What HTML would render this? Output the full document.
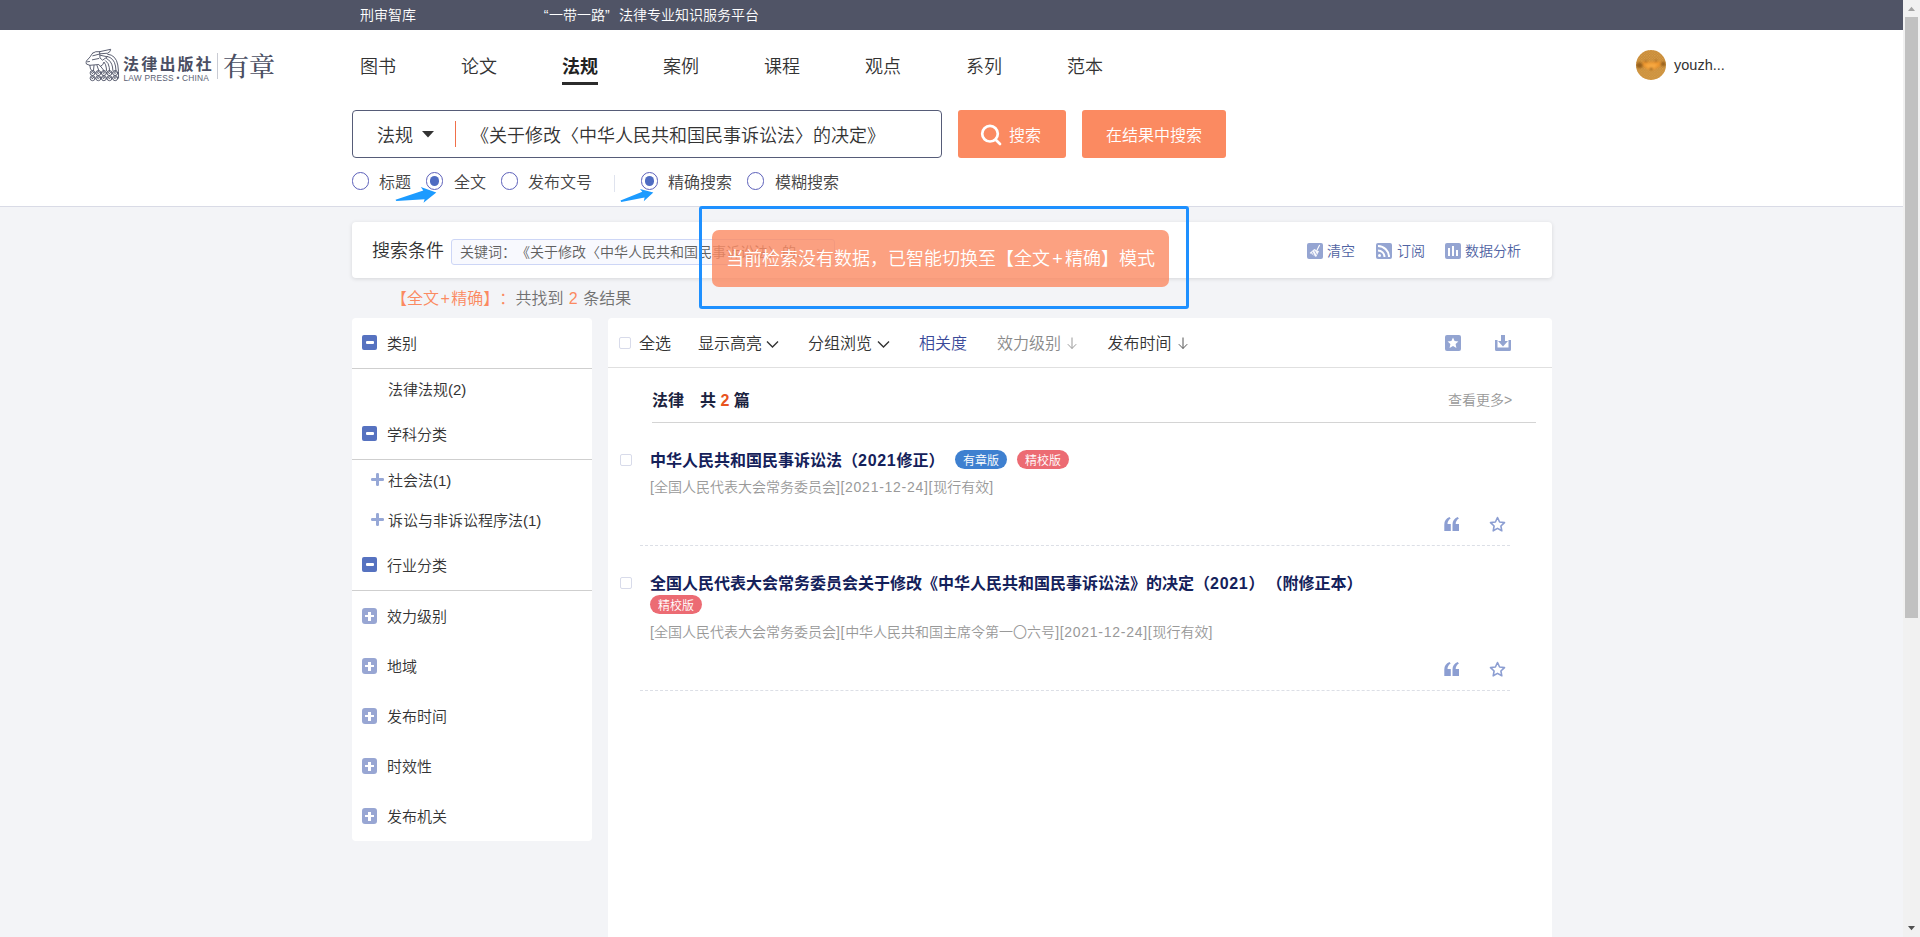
<!DOCTYPE html>
<html lang="zh-CN">
<head>
<meta charset="utf-8">
<title>法规检索 - 有章</title>
<style>
*{box-sizing:border-box;margin:0;padding:0}
html,body{width:1920px;height:937px;overflow:hidden}
body{font-weight:350;text-spacing-trim:space-all;font-family:"Liberation Sans","Noto Sans CJK SC",sans-serif;background:#f3f4f7;color:#333;position:relative}
.abs{position:absolute;white-space:nowrap}
#topbar{position:absolute;left:0;top:0;width:1903px;height:30px;background:#505466}
#topbar span{position:absolute;top:0;line-height:30px;color:#fff;font-size:14px;white-space:nowrap}
#topbar i.q{display:inline-block;width:9px;font-style:normal;text-align:center}
#header{position:absolute;left:0;top:30px;width:1903px;height:177px;background:#fff;border-bottom:1px solid #d9dbe6}
#scroll{position:absolute;left:1903px;top:0;width:17px;height:937px;background:#f1f1f1}
#scroll .thumb{position:absolute;left:2px;top:17px;width:13px;height:601px;background:#c1c1c1}
.nav{position:absolute;top:53px;font-size:18px;line-height:28px;color:#333}
.nav.on{font-weight:bold;color:#222}
.nav.on:after{content:"";position:absolute;left:0;right:0;bottom:-4px;height:3px;background:#2b2b2b}
#sbox{position:absolute;left:352px;top:110px;width:590px;height:48px;border:1px solid #565c78;border-radius:4px;background:#fff}
.btn{position:absolute;top:110px;height:48px;background:#fb8a61;border-radius:3px;color:#fff;font-size:16px;line-height:51px;overflow:hidden;text-align:center}
.radio{position:absolute;top:172.400px;width:17.400px;height:17.400px;border:1.200px solid #5c60ba;border-radius:50%;background:#fff}
.radio.on:after{content:"";position:absolute;left:2.800px;top:2.800px;width:9.400px;height:9.400px;border-radius:50%;background:#4f6cc2}
.rl{position:absolute;top:171.500px;font-size:16px;line-height:22px;color:#444}
.card{position:absolute;background:#fff;border-radius:4px}

.ico{position:absolute}
.t14{font-size:14px;line-height:20px}
.t15{font-size:15px;line-height:22px;color:#333;margin-top:1px}
.t16{font-size:16px;line-height:22px}
.sep{position:absolute;height:1px;background:#cfcfcf}
.mi{position:absolute;left:362px;width:15px;height:15px;border-radius:2px;background:#5672c0}
.mi:after{content:"";position:absolute;left:4px;top:6px;width:8px;height:3px;background:#fff;border-radius:1px}
.pi{position:absolute;left:362px;width:15px;height:16px;border-radius:3px;background:#98a6d3}
.pi:before{content:"";position:absolute;left:3px;top:6.800px;width:9px;height:2.400px;background:#fff}
.pi:after{content:"";position:absolute;left:6.300px;top:3.500px;width:2.400px;height:9px;background:#fff}
.sp{position:absolute;width:12.500px;height:12.500px}
.sp:before{content:"";position:absolute;left:0;top:5px;width:12.500px;height:2.500px;border-radius:1.250px;background:#96a7d6}
.sp:after{content:"";position:absolute;left:5px;top:0;width:2.500px;height:12.500px;border-radius:1.250px;background:#96a7d6}
.cb{position:absolute;width:12px;height:12px;border:1px solid #d8dbea;border-radius:2px;background:#fff}
.pill{position:absolute;width:52px;height:19px;border-radius:9.500px;color:#fff;font-size:12px;line-height:22px;text-align:center;overflow:hidden}
.title{position:absolute;left:650px;font-size:16px;line-height:24px;font-weight:bold;color:#14215a;white-space:nowrap}
.meta{position:absolute;left:650px;font-size:14px;line-height:20px;color:#999;white-space:nowrap}
.dash{position:absolute;left:640px;width:870px;height:0;border-top:1px dashed #dcdfe6}
.ls{letter-spacing:0.720px}
</style>
</head>
<body>
<div id="topbar">
  <span style="left:360px">刑审智库</span>
  <span style="left:543px"><i class="q" style="width:6px">“</i>一带一路<i class="q" style="width:14px;text-align:left">”</i>法律专业知识服务平台</span>
</div>
<div id="header"></div>
<div id="scroll"><div class="thumb"></div><svg class="ico" style="left:0;top:0" width="17" height="937" viewBox="0 0 17 937"><path d="M5 11 L8.500 6.700 L12 11 Z" fill="#a3a3a3"/><path d="M5 926 L8.500 930.300 L12 926 Z" fill="#505050"/></svg></div>

<!-- nav -->
<div class="nav" style="left:360px">图书</div>
<div class="nav" style="left:461px">论文</div>
<div class="nav on" style="left:562px">法规</div>
<div class="nav" style="left:663px">案例</div>
<div class="nav" style="left:764px">课程</div>
<div class="nav" style="left:865px">观点</div>
<div class="nav" style="left:966px">系列</div>
<div class="nav" style="left:1067px">范本</div>

<!-- logo -->
<svg class="ico" style="left:80px;top:44px" width="48" height="40" viewBox="0 0 48 40" fill="none" stroke="#4b4f63" stroke-width="0.900" stroke-linecap="round" stroke-linejoin="round">
  <g>
    <circle cx="12.600" cy="29" r="2.500"/><circle cx="18.400" cy="29" r="2.500"/><circle cx="23.900" cy="29" r="2.500"/><circle cx="29.500" cy="29" r="2.500"/><circle cx="35.200" cy="29" r="2.500"/>
    <circle cx="12.600" cy="34.200" r="2.500"/><circle cx="18.400" cy="34.200" r="2.500"/><circle cx="23.900" cy="34.200" r="2.500"/><circle cx="29.500" cy="34.200" r="2.500"/><circle cx="35.200" cy="34.200" r="2.500"/>
    <path d="M12.600 29.500 a1 1 0 1 1 1 -1 M18.400 29.500 a1 1 0 1 1 1 -1 M23.900 29.500 a1 1 0 1 1 1 -1 M29.500 29.500 a1 1 0 1 1 1 -1 M35.200 29.500 a1 1 0 1 1 1 -1"/>
    <path d="M12.600 34.700 a1 1 0 1 1 1 -1 M18.400 34.700 a1 1 0 1 1 1 -1 M23.900 34.700 a1 1 0 1 1 1 -1 M29.500 34.700 a1 1 0 1 1 1 -1 M35.200 34.700 a1 1 0 1 1 1 -1"/>
  </g>
  <path d="M27.700 10.200 Q36 11 37.800 21 Q38.800 27 38.600 34"/>
  <path d="M27.300 12.400 Q34 14 35.500 22 L36 27"/>
  <path d="M26.500 14.500 Q31.500 17 32.500 23 L32.900 26.500"/>
  <path d="M25.600 16.700 Q28.800 19 29.300 23.500 L29.500 26.500"/>
  <path d="M24.300 18.400 Q26 20.500 26.300 24 L26.500 26.500"/>
  <path d="M12.800 9 Q15.500 7 19.600 7.700 L30.700 5.300 Q30.500 8 27.700 9.200 L20 9.800"/>
  <path d="M19.600 7.700 L20 14 L22.600 16.200 L27.300 12.800 L20.200 11.200"/>
  <path d="M12.800 9 Q11 11 10.200 12.800 L6.400 17 Q5.800 18.500 6.400 20 L9.800 21.300 L18.800 20.500 Q19.500 22 20.500 22.200 Q23 21.500 23.900 18.400"/>
  <path d="M12.400 15.800 L18.800 14.500 M12.800 11.800 L19 10.200 M7.500 17.800 L9.500 17.500"/>
  <path d="M9.800 21.300 L10.500 25 L12 26.500 M14 21.500 L13.500 26.500 M17 21.500 L18.800 26.500 M20.500 22.200 L23.900 26.500"/>
</svg>
<div class="abs" style="left:123px;top:54.500px;font-size:16px;line-height:20px;font-weight:bold;color:#4b4f63;letter-spacing:2.200px">法律出版社</div>
<div class="abs" style="left:123.500px;top:73px;font-size:8.400px;line-height:10px;color:#5b5f73;letter-spacing:0.200px">LAW PRESS • CHINA</div>
<div class="abs" style="left:217px;top:53px;width:1px;height:26px;background:#c9cbd3"></div>
<div class="abs" style="left:223px;top:51px;font-family:'Liberation Serif','Noto Serif CJK SC',serif;font-size:26px;line-height:34px;font-weight:500;color:#4b4f63">有章</div>

<!-- avatar -->
<svg class="ico" style="left:1636px;top:50px" width="30" height="30" viewBox="0 0 30 30">
  <defs><clipPath id="av"><circle cx="15" cy="15" r="15"/></clipPath><filter id="bl" x="-20%" y="-20%" width="140%" height="140%"><feGaussianBlur stdDeviation="1"/></filter>
  <pattern id="wv" width="2.600" height="2.600" patternUnits="userSpaceOnUse"><rect width="2.600" height="2.600" fill="#c48634"/><rect width="1.300" height="1.300" fill="#d9a04c"/><rect x="1.300" y="1.300" width="1.300" height="1.300" fill="#d39a48"/></pattern></defs>
  <g clip-path="url(#av)">
    <rect width="30" height="30" fill="url(#wv)"/>
    <g filter="url(#bl)">
      <rect x="0" y="19" width="30" height="11" fill="#d29a45" opacity="0.500"/>
      <ellipse cx="3.600" cy="15.200" rx="3.400" ry="2.800" fill="#96601f"/>
      <ellipse cx="27" cy="13.900" rx="2.800" ry="2.200" fill="#96601f"/>
      <path d="M6 11.200 L10 12.600 L12 12.100 L20.900 11.700 L24.900 11.600 L24.400 15.700 L19 19 L15.200 20.400 L11.500 19 L7.400 16.600 Z" fill="#ee962e"/>
      <path d="M9 14.500 Q15 12.500 21.500 14.300 L19 17.500 L15.200 19 L11.500 17.800 Z" fill="#f6a942"/>
      <ellipse cx="9.800" cy="11.500" rx="1.400" ry="0.800" fill="#7a4510"/>
      <ellipse cx="20" cy="11" rx="1.300" ry="0.800" fill="#7a4510"/>
      <circle cx="15.200" cy="18.900" r="1.100" fill="#4a2c0c"/>
    </g>
  </g>
</svg>
<div class="abs" style="left:1674px;top:55px;font-size:14.500px;line-height:20px;color:#333">youzh...</div>

<!-- search -->
<div id="sbox"></div>
<div class="abs" style="left:377px;top:122px;font-size:18px;line-height:28px;color:#333">法规</div>
<svg class="ico" style="left:422px;top:131px" width="12" height="7" viewBox="0 0 12 7"><path d="M0 0H12L6 6.500Z" fill="#333"/></svg>
<div class="abs" style="left:455px;top:121px;width:1px;height:26px;background:#f0704a"></div>
<div class="abs" style="left:471px;top:122px;font-size:18px;line-height:28px;color:#333">《关于修改〈中华人民共和国民事诉讼法〉的决定》</div>

<!-- radios -->
<div class="radio" style="left:352px"></div><div class="rl" style="left:379px">标题</div>
<div class="radio on" style="left:426px"></div><div class="rl" style="left:454px">全文</div>
<div class="radio" style="left:501px"></div><div class="rl" style="left:528px">发布文号</div>
<div class="abs" style="left:614px;top:175px;width:1px;height:17px;background:#dfe3ee"></div>
<div class="radio on" style="left:641px"></div><div class="rl" style="left:668px">精确搜索</div>
<div class="radio" style="left:747px"></div><div class="rl" style="left:775px">模糊搜索</div>
<svg class="ico" style="left:390px;top:184px" width="280" height="22" viewBox="390 184 280 22"><path d="M395.500 199.800 L423.300 190.600 L420.800 186.900 L436.300 192.500 L423.500 202.700 L424.600 199.200 L396.300 201.100 Z" fill="#1c9bff"/><path d="M620.500 200.400 L642.300 191.700 L640 189 L653.300 192.500 L643.800 201.300 L644.600 197.500 L621.200 202 Z" fill="#1c9bff"/></svg>

<div class="btn" style="left:958px;width:108px"></div>
<svg class="ico" style="left:979px;top:122.800px" width="26" height="24" viewBox="0 0 26 24" fill="none" stroke="#fff" stroke-width="2.700" stroke-linecap="round"><circle cx="11" cy="10.700" r="7.800"/><path d="M17.500 17.500 L21 21"/></svg>
<div class="abs" style="left:1009px;top:123.500px;font-size:16px;line-height:24px;color:#fff">搜索</div>
<div class="btn" style="left:1082px;width:144px">在结果中搜索</div>


<!-- condition card -->
<div class="card" style="left:352px;top:222px;width:1200px;height:56px;box-shadow:0 1px 4px rgba(0,0,0,.12)"></div>
<div class="abs" style="left:372px;top:237px;font-size:18px;line-height:28px;color:#333">搜索条件</div>
<div class="abs" style="left:451px;top:238.500px;width:384px;height:26.500px;border:1px solid #cdd6f6;border-radius:3px;background:#f8f9fe"></div>
<div class="abs" style="left:460px;top:242px;font-size:14px;line-height:20px;color:#606060">关键词：《关于修改〈中华人民共和国民事诉讼法〉的...</div>
<div class="abs" style="left:816px;top:242px;font-size:14px;line-height:20px;color:#aaa">×</div>

<svg class="ico" style="left:1306.500px;top:243px" width="16" height="16" viewBox="0 0 16 16"><rect width="16" height="16" rx="2" fill="#95a5d2"/><path d="M12.500 2.300 L10.200 6.800" stroke="#fff" stroke-width="1.100" fill="none" stroke-linecap="round"/><path d="M2.600 9.900 L7.300 6 L12 8.300 L9.100 14 Z" fill="#fff" opacity="0.920"/><path d="M5.200 8.700 L7.200 12.700 M7.500 7.600 L9.800 11.800 M4 10.700 L5.400 11.700" stroke="#95a5d2" stroke-width="0.800" fill="none"/></svg>
<div class="abs t14" style="left:1327px;top:241px;color:#4f63a3">清空</div>
<svg class="ico" style="left:1376px;top:243px" width="16" height="16" viewBox="0 0 16 16"><rect width="16" height="16" rx="2" fill="#95a5d2"/><circle cx="3.500" cy="12.500" r="1.500" fill="#fff"/><path d="M2 7.500 A6.500 6.500 0 0 1 8.500 14 M2 3 A11 11 0 0 1 13 14" stroke="#fff" stroke-width="2" fill="none"/></svg>
<div class="abs t14" style="left:1397px;top:241px;color:#4f63a3">订阅</div>
<svg class="ico" style="left:1445px;top:243px" width="16" height="16" viewBox="0 0 16 16"><rect width="16" height="16" rx="2" fill="#95a5d2"/><rect x="3" y="5" width="2" height="8" fill="#fff"/><rect x="7" y="3" width="2" height="10" fill="#fff"/><rect x="11" y="7" width="2" height="6" fill="#fff"/></svg>
<div class="abs t14" style="left:1465px;top:241px;color:#4f63a3">数据分析</div>


<!-- left panel -->
<div class="card" style="left:352px;top:318px;width:240px;height:523px"></div>
<div class="mi" style="top:335px"></div><div class="abs t15" style="left:387px;top:332px">类别</div>
<div class="sep" style="left:352px;top:368px;width:240px"></div>
<div class="abs t15" style="left:388px;top:378px">法律法规(2)</div>
<div class="mi" style="top:426px"></div><div class="abs t15" style="left:387px;top:423px">学科分类</div>
<div class="sep" style="left:352px;top:459px;width:240px"></div>
<div class="sp" style="left:371.400px;top:473.300px"></div><div class="abs t15" style="left:388px;top:469px">社会法(1)</div>
<div class="sp" style="left:371.400px;top:513.300px"></div><div class="abs t15" style="left:388px;top:509px">诉讼与非诉讼程序法(1)</div>
<div class="mi" style="top:557px"></div><div class="abs t15" style="left:387px;top:554px">行业分类</div>
<div class="sep" style="left:352px;top:590px;width:240px"></div>
<div class="pi" style="top:608px"></div><div class="abs t15" style="left:387px;top:605px">效力级别</div>
<div class="pi" style="top:658px"></div><div class="abs t15" style="left:387px;top:655px">地域</div>
<div class="pi" style="top:708px"></div><div class="abs t15" style="left:387px;top:705px">发布时间</div>
<div class="pi" style="top:758px"></div><div class="abs t15" style="left:387px;top:755px">时效性</div>
<div class="pi" style="top:808px"></div><div class="abs t15" style="left:387px;top:805px">发布机关</div>

<!-- right panel -->
<div class="card" style="left:608px;top:318px;width:944px;height:640px"></div>
<div class="cb" style="left:619px;top:337px"></div>
<div class="abs t16" style="left:639px;top:333px;color:#333">全选</div>
<div class="abs t16" style="left:698px;top:333px;color:#333">显示高亮</div>
<svg class="ico" style="left:766px;top:340px" width="13" height="9" viewBox="0 0 13 9" fill="none" stroke="#333" stroke-width="1.400"><path d="M1 1.500 L6.500 7 L12 1.500"/></svg>
<div class="abs t16" style="left:808px;top:333px;color:#333">分组浏览</div>
<svg class="ico" style="left:877px;top:340px" width="13" height="9" viewBox="0 0 13 9" fill="none" stroke="#333" stroke-width="1.400"><path d="M1 1.500 L6.500 7 L12 1.500"/></svg>
<div class="abs t16" style="left:919px;top:333px;color:#3a4a9a">相关度</div>
<div class="abs t16" style="left:997px;top:333px;color:#8a8a8a">效力级别</div>
<svg class="ico" style="left:1067px;top:337px" width="10" height="13" viewBox="0 0 10 13" fill="none" stroke="#999" stroke-width="1"><path d="M5 0.500 V11.500 M0.800 7.200 L5 11.500 L9.200 7.200"/></svg>
<div class="abs t16" style="left:1107.500px;top:333px;color:#333">发布时间</div>
<svg class="ico" style="left:1178px;top:337px" width="10" height="13" viewBox="0 0 10 13" fill="none" stroke="#555" stroke-width="1"><path d="M5 0.500 V11.500 M0.800 7.200 L5 11.500 L9.200 7.200"/></svg>
<svg class="ico" style="left:1444.500px;top:335px" width="16" height="16" viewBox="0 0 16 16"><rect width="16" height="16" rx="2" fill="#93a4d1"/><path d="M8 2.600 L9.600 6.100 L13.400 6.500 L10.600 9.100 L11.400 12.900 L8 11 L4.600 12.900 L5.400 9.100 L2.600 6.500 L6.400 6.100 Z" fill="#fff"/></svg>
<svg class="ico" style="left:1494.600px;top:335px" width="16" height="16" viewBox="0 0 16 16" fill="#93a4d1"><path d="M0 5 H2.500 V12.500 H13.500 V5 H16 V14.500 Q16 16 14.500 16 H1.500 Q0 16 0 14.500 Z"/><path d="M6 0 H10 V6 H13 L8 11.500 L3 6 H6 Z"/></svg>
<div class="sep" style="left:608px;top:367px;width:944px;background:#e0e0e0"></div>

<div class="abs t16" style="left:652px;top:390px;font-weight:bold;color:#1b2340">法律</div>
<div class="abs t16" style="left:700px;top:390px;font-weight:bold;color:#1b2340">共 <span style="color:#e8541e">2</span> 篇</div>
<div class="abs t14" style="left:1448px;top:390px;color:#999">查看更多&gt;</div>
<div class="sep" style="left:652px;top:422px;width:884px;background:#d4d4d4"></div>

<div class="cb" style="left:620px;top:454px"></div>
<div class="title" style="top:449px">中华人民共和国民事诉讼法（<span class="ls">2021</span>修正）</div>
<div class="pill" style="left:955px;top:450px;background:#3e80d0">有章版</div>
<div class="pill" style="left:1017px;top:450px;background:#ec6b73">精校版</div>
<div class="meta" style="top:477px">[全国人民代表大会常务委员会<span class="ls">][2021-12-24][</span>现行有效]</div>
<svg class="ico" style="left:1444px;top:517px" width="16" height="14" viewBox="0 0 16 14" fill="#8c9ed2"><path d="M0.300 14 V7.500 Q0.300 2 5.500 0 L6.700 1.500 Q3.500 3.500 3.500 7 H6.800 V14 Z"/><path d="M8.500 14 V7.500 Q8.500 2 13.700 0 L14.900 1.500 Q11.700 3.500 11.700 7 H15 V14 Z"/></svg>
<svg class="ico" style="left:1489px;top:516px" width="17" height="16" viewBox="0 0 17 16" fill="none" stroke="#8c9ed2" stroke-width="1.600" stroke-linejoin="round"><path d="M8.500 1.500 L10.600 6 L15.500 6.600 L11.900 10 L12.800 14.800 L8.500 12.400 L4.200 14.800 L5.100 10 L1.500 6.600 L6.400 6 Z"/></svg>
<div class="dash" style="top:545px"></div>

<div class="cb" style="left:620px;top:577px"></div>
<div class="title" style="top:571.700px">全国人民代表大会常务委员会关于修改《中华人民共和国民事诉讼法》的决定（<span class="ls">2021</span>）<span style="margin-left:2px">（附修正本）</span></div>
<div class="pill" style="left:650px;top:595.200px;background:#ec6b73">精校版</div>
<div class="meta" style="top:622px">[全国人民代表大会常务委员会<span class="ls">][</span>中华人民共和国主席令第一〇六号<span class="ls">][2021-12-24][</span>现行有效]</div>
<svg class="ico" style="left:1444px;top:662px" width="16" height="14" viewBox="0 0 16 14" fill="#8c9ed2"><path d="M0.300 14 V7.500 Q0.300 2 5.500 0 L6.700 1.500 Q3.500 3.500 3.500 7 H6.800 V14 Z"/><path d="M8.500 14 V7.500 Q8.500 2 13.700 0 L14.900 1.500 Q11.700 3.500 11.700 7 H15 V14 Z"/></svg>
<svg class="ico" style="left:1489px;top:661px" width="17" height="16" viewBox="0 0 17 16" fill="none" stroke="#8c9ed2" stroke-width="1.600" stroke-linejoin="round"><path d="M8.500 1.500 L10.600 6 L15.500 6.600 L11.900 10 L12.800 14.800 L8.500 12.400 L4.200 14.800 L5.100 10 L1.500 6.600 L6.400 6 Z"/></svg>
<div class="dash" style="top:690px"></div>

<!-- result count -->
<div class="abs t16" style="left:391px;top:288px;color:#707070;word-spacing:1px"><span style="color:#fb8a61">【全文<span style="padding:0 1.500px">+</span>精确】：</span>共找到 <span style="color:#fb8a61">2</span> 条结果</div>

<!-- highlight box + toast -->
<div class="abs" style="left:699px;top:206px;width:490px;height:103px;border:3px solid #1e90ff;border-radius:3px"></div>
<div class="abs" style="left:712px;top:230px;width:457px;height:57px;border-radius:7px;background:rgba(251,138,97,.8);color:#fff;font-size:18px;line-height:59.500px;overflow:hidden;text-align:center">当前检索没有数据，已智能切换至【全文<span style="padding:0 2.200px">+</span>精确】模式</div>
</body>
</html>
